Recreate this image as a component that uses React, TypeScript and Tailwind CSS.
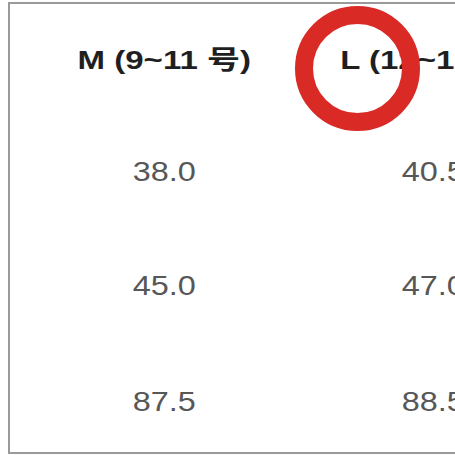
const rows = [
  { m: "38.0", l: "40.5", h: "h-[112px]" },
  { m: "45.0", l: "47.0", h: "h-[116px]" },
  { m: "87.5", l: "88.5", h: "flex-1 pt-[8px]" },
];

export default function App() {
  return (
    <div className="relative h-[455px] w-[455px] overflow-hidden bg-white font-['Liberation_Sans','Noto_Sans_CJK_SC',sans-serif]">
      <div className="ml-[8px] mt-[2px] flex h-[452px] flex-col border-b-2 border-l-2 border-t-2 border-[#9a9a9a]">
        <div className="grid h-[112px] shrink-0 grid-cols-[308px_230px] items-center whitespace-nowrap">
          <div className="flex justify-center">
            <span className="inline-block scale-x-[1.27] text-[26px] font-bold leading-none text-[#1f1f1f]">
              M (9~11 号)
            </span>
          </div>
          <div className="flex justify-center">
            <span className="inline-block scale-x-[1.27] text-[26px] font-bold leading-none text-[#1f1f1f]">
              L (12~13 号)
            </span>
          </div>
        </div>
        {rows.map((r) => (
          <div
            key={r.m}
            className={`grid ${r.h} grid-cols-[308px_230px] items-center whitespace-nowrap`}
          >
            <div className="flex justify-center">
              <span className="inline-block scale-x-[1.2] text-[27px] leading-none text-[#575757]">
                {r.m}
              </span>
            </div>
            <div className="flex justify-center">
              <span className="inline-block scale-x-[1.2] text-[27px] leading-none text-[#575757]">
                {r.l}
              </span>
            </div>
          </div>
        ))}
      </div>
      <div className="absolute left-[295px] top-[6px] h-[125px] w-[125px] rounded-full border-[18px] border-[#d92a26]" />
    </div>
  );
}
